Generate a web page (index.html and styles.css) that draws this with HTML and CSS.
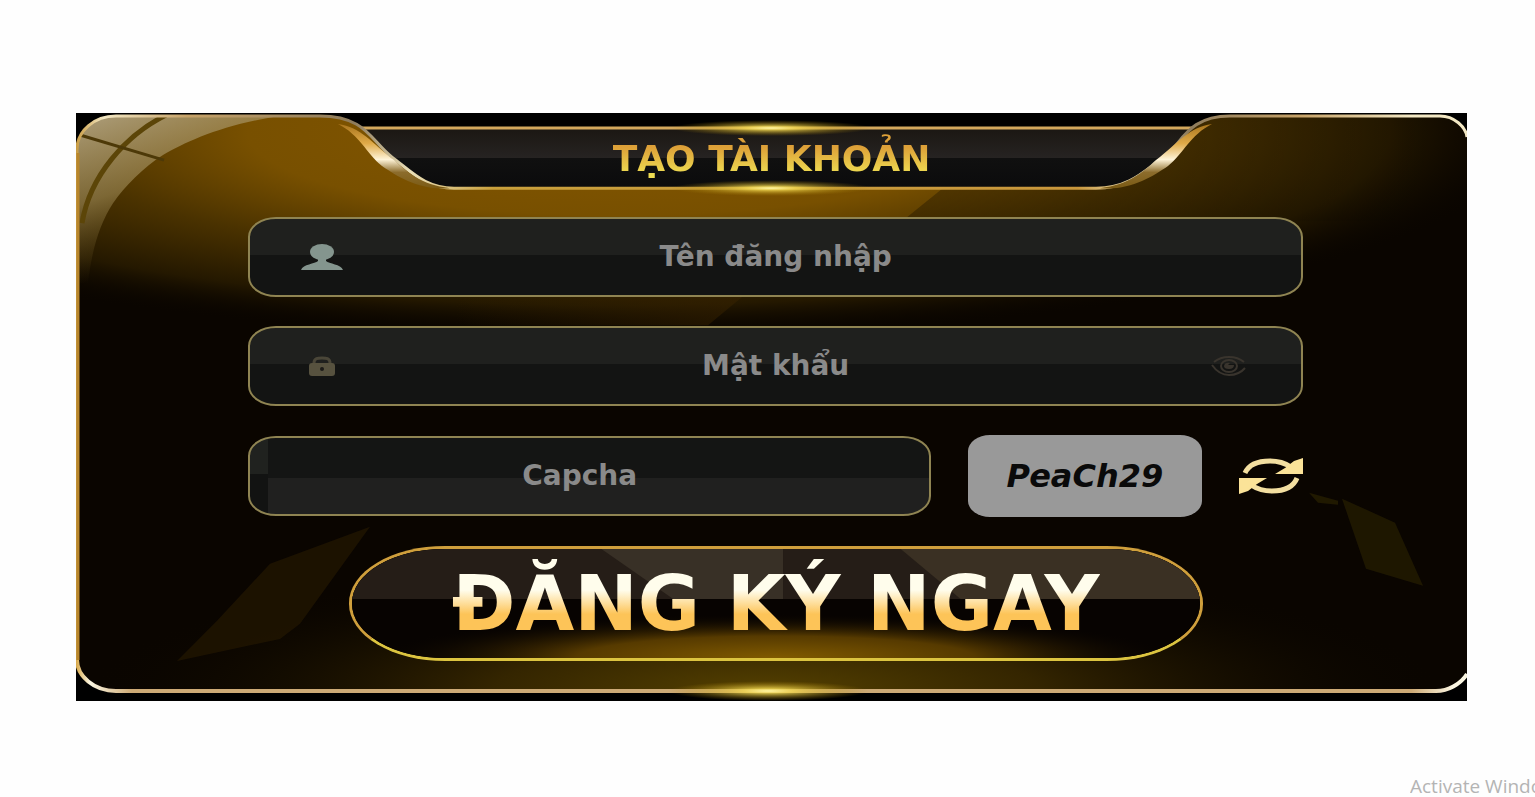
FILE: index.html
```html
<!DOCTYPE html>
<html lang="vi">
<head>
    <meta charset="UTF-8">
    <meta name="viewport" content="width=device-width, initial-scale=1.0">
    <title>Tạo tài khoản</title>
    <link rel="stylesheet" href="styles.css">
</head>
<body>
    <main class="panel">
        <!-- Gold frame and glow behind the form -->
        <svg class="panel-frame" viewBox="0 0 1391 587" preserveAspectRatio="none" aria-hidden="true">
            <defs>
                <radialGradient id="amber" gradientUnits="userSpaceOnUse" cx="0" cy="0" r="1" gradientTransform="translate(540 20) scale(920 205)">
                    <stop offset="0" stop-color="#855700"/>
                    <stop offset="0.4" stop-color="#785000"/>
                    <stop offset="0.62" stop-color="#4a3200"/>
                    <stop offset="0.84" stop-color="#241800"/>
                    <stop offset="1" stop-color="#0a0500" stop-opacity="0"/>
                </radialGradient>
                <radialGradient id="floor" gradientUnits="userSpaceOnUse" cx="0" cy="0" r="1" gradientTransform="translate(690 577) scale(680 130)">
                    <stop offset="0" stop-color="#544000"/>
                    <stop offset="0.4" stop-color="#342500"/>
                    <stop offset="1" stop-color="#0a0500" stop-opacity="0"/>
                </radialGradient>
                <linearGradient id="shade" x1="0" y1="0" x2="1" y2="0">
                    <stop offset="0" stop-color="#000" stop-opacity="0.3"/>
                    <stop offset="1" stop-color="#000" stop-opacity="0"/>
                </linearGradient>
                <linearGradient id="beam" x1="0" y1="0" x2="1" y2="0">
                    <stop offset="0" stop-color="#3a2400" stop-opacity="0"/>
                    <stop offset="1" stop-color="#3a2400" stop-opacity="0.5"/>
                </linearGradient>
                <linearGradient id="gloss" gradientUnits="userSpaceOnUse" x1="20" y1="5" x2="70" y2="150">
                    <stop offset="0" stop-color="#b8aa88" stop-opacity="0.85"/>
                    <stop offset="0.5" stop-color="#a08c58" stop-opacity="0.6"/>
                    <stop offset="1" stop-color="#5c4610" stop-opacity="0"/>
                </linearGradient>
                <linearGradient id="tab" x1="0" y1="0" x2="0" y2="1">
                    <stop offset="0" stop-color="#1b1712"/>
                    <stop offset="0.5" stop-color="#262322"/>
                    <stop offset="0.5" stop-color="#101010"/>
                    <stop offset="1" stop-color="#0b0b0c"/>
                </linearGradient>
                <linearGradient id="edge" gradientUnits="userSpaceOnUse" x1="0" y1="0" x2="1391" y2="0">
                    <stop offset="0" stop-color="#c89a40"/>
                    <stop offset="0.02" stop-color="#f3e8c4"/>
                    <stop offset="0.08" stop-color="#c6a268"/>
                    <stop offset="0.2" stop-color="#8d7b5c"/>
                    <stop offset="0.24" stop-color="#eadfb8"/>
                    <stop offset="0.3" stop-color="#c9a03c"/>
                    <stop offset="0.72" stop-color="#c9973c"/>
                    <stop offset="0.76" stop-color="#eadfb8"/>
                    <stop offset="0.8" stop-color="#8d7b5c"/>
                    <stop offset="0.88" stop-color="#c6a268"/>
                    <stop offset="0.96" stop-color="#f3e8c4"/>
                </linearGradient>
                <linearGradient id="edge-bottom" gradientUnits="userSpaceOnUse" x1="0" y1="0" x2="1391" y2="0">
                    <stop offset="0" stop-color="#d8a848"/>
                    <stop offset="0.01" stop-color="#fbf6e2"/>
                    <stop offset="0.04" stop-color="#cdaa76"/>
                    <stop offset="0.96" stop-color="#cdaa76"/>
                    <stop offset="0.99" stop-color="#fbf6e2"/>
                </linearGradient>
                <linearGradient id="ribbon" x1="0" y1="0" x2="0" y2="1">
                    <stop offset="0" stop-color="#a8741c"/>
                    <stop offset="0.3" stop-color="#e0aa48"/>
                    <stop offset="0.55" stop-color="#fff4d8"/>
                    <stop offset="0.75" stop-color="#8c6c2c"/>
                    <stop offset="1" stop-color="#7a5a14"/>
                </linearGradient>
                <radialGradient id="flare">
                    <stop offset="0" stop-color="#fff7a8"/>
                    <stop offset="0.25" stop-color="#f2d850" stop-opacity="0.8"/>
                    <stop offset="1" stop-color="#a07800" stop-opacity="0"/>
                </radialGradient>
                <clipPath id="body-clip">
                    <path d="M1 36C1 18 18 3 40 3H244C290 3 295 28 316 44S350 75 378 75H1020C1055 75 1070 56 1088 44S1110 3 1154 3H1364C1378 3 1390 14 1391 24V560C1385 570 1372 577 1360 577H40C18 577 1 562 1 546Z"/>
                </clipPath>
            </defs>
            <rect width="1391" height="587" fill="#000"/>
            <rect x="284" y="15" width="840" height="60" fill="url(#tab)"/>
            <path d="M286 15H1122" stroke="#d2a75c" stroke-width="3"/>

            <g clip-path="url(#body-clip)">
                <rect width="1391" height="587" fill="#0a0500"/>
                <rect width="1391" height="587" fill="url(#amber)"/>
                <rect y="400" width="1391" height="187" fill="url(#floor)"/>
                <path d="M960 0L826 108H1391V0Z" fill="url(#shade)"/>
                <path d="M667 183L632 212H380V183Z" fill="url(#beam)"/>
                <path d="M0 0H230C160 6 114 26 87 42C68 54 48 74 37 90C24 110 16 135 12 170H0Z" fill="url(#gloss)"/>
                <path d="M90 2C50 22 14 62 6 110" fill="none" stroke="#5c4508" stroke-width="5"/>
                <path d="M4 22L88 47" stroke="#4d3908" stroke-width="3"/>
                <path d="M294 413L194 450L141 507L101 547L204 525L224 510Z" fill="#281a00" opacity="0.6"/>
                <path d="M1266 385L1319 409L1347 472L1290 455Z" fill="#221b00" opacity="0.85"/>
                <path d="M1233 379L1262 387V391L1242 389Z" fill="#201900"/>
            </g>

            <path d="M1 546V36C1 18 18 3 40 3H244C290 3 295 28 316 44S350 75 378 75H1020C1055 75 1070 56 1088 44S1110 3 1154 3H1364C1378 3 1390 14 1391 24" fill="none" stroke="url(#edge)" stroke-width="3"/>
            <path d="M1391 560C1385 570 1372 577 1360 577H40C18 577 1 562 1 546" fill="none" stroke="url(#edge-bottom)" stroke-width="4"/>
            <path d="M2 546V40" stroke="#b8862c" stroke-width="3"/>
            <path d="M262 11C285 14 296 30 318 47C330 58 345 72 374 75C345 78 322 64 306 53C290 40 284 22 262 11Z" fill="url(#ribbon)"/>
            <path d="M1136 11C1113 14 1102 30 1080 47C1068 58 1053 72 1024 75C1053 78 1076 64 1092 53C1108 40 1114 22 1136 11Z" fill="url(#ribbon)"/>

            <ellipse cx="695" cy="15" rx="100" ry="8" fill="url(#flare)"/>
            <ellipse cx="695" cy="75" rx="100" ry="8" fill="url(#flare)"/>
            <ellipse cx="692" cy="577" rx="100" ry="10" fill="url(#flare)"/>
        </svg>

        <h1 class="title"><span>TẠO TÀI KHOẢN</span></h1>

        <form class="form">
            <div class="field">
                <svg class="icon-user" viewBox="0 0 42 26" fill="#84958e" aria-hidden="true">
                    <ellipse cx="21" cy="8" rx="12" ry="8"/>
                    <path d="M17 14V17C14 20 2 20 0 26H42C40 20 28 20 25 17V14Z"/>
                </svg>
                <input type="text" placeholder="Tên đăng nhập" aria-label="Tên đăng nhập">
            </div>

            <div class="field">
                <svg class="icon-lock" viewBox="0 0 28 20" aria-hidden="true">
                    <path d="M6 9V7C6 2 10 2 14 2S22 2 22 7V9" fill="none" stroke="#4a4638" stroke-width="3"/>
                    <rect x="1" y="7" width="26" height="13" rx="3" fill="#57523f"/>
                    <ellipse cx="14" cy="13" rx="2" ry="2" fill="#1c1b18"/>
                </svg>
                <input type="password" placeholder="Mật khẩu" aria-label="Mật khẩu">
                <button type="button" class="icon-button" aria-label="Hiện mật khẩu">
                    <svg class="icon-eye" viewBox="0 0 36 20" fill="none" stroke="#39342d" stroke-width="2" aria-hidden="true">
                        <path d="M3 6Q9 1 18 1T33 6M1 9Q8 19 18 19T34 12"/>
                        <ellipse cx="18" cy="10" rx="8" ry="6"/>
                        <path d="M13 10Q14 6 19 7L17 9L23 9Q23 13 18 13T13 10Z" fill="#39342d" stroke="none"/>
                    </svg>
                </button>
            </div>

            <div class="captcha-row">
                <div class="field field-captcha">
                    <input type="text" placeholder="Capcha" aria-label="Capcha">
                </div>
                <div class="captcha-code">PeaCh29</div>
                <button type="button" class="icon-button" aria-label="Đổi mã">
                    <svg class="icon-refresh" viewBox="0 0 64 36" aria-hidden="true">
                        <g fill="none" stroke="#f3dfa0" stroke-width="5">
                            <path d="M6 15C10 6 19 3 31 3C40 3 46 5 52 9"/>
                            <path d="M58 20C54 30 44 33 33 33C24 33 18 31 12 27"/>
                        </g>
                        <path d="M64 0V16H36L46 10L55 3Z" fill="#fbe398"/>
                        <path d="M0 36V20H28L18 26L9 33Z" fill="#fbe398"/>
                    </svg>
                </button>
            </div>

            <button type="submit" class="submit">
                <svg class="submit-glass" viewBox="0 0 850 109" preserveAspectRatio="none" aria-hidden="true">
                    <defs>
                        <radialGradient id="submit-glow" gradientUnits="userSpaceOnUse" cx="0" cy="0" r="1" gradientTransform="translate(425 109) scale(400 44)">
                            <stop offset="0" stop-color="#805a00"/>
                            <stop offset="0.5" stop-color="#563a00"/>
                            <stop offset="1" stop-color="#0a0500" stop-opacity="0"/>
                        </radialGradient>
                    </defs>
                    <rect width="850" height="109" fill="#070301"/>
                    <rect width="850" height="50" fill="#251d17"/>
                    <path d="M250 0H432V50H322Z" fill="#383026"/>
                    <path d="M550 0H850V50H610Z" fill="#3a3023"/>
                    <rect y="50" width="850" height="59" fill="url(#submit-glow)"/>
                </svg>
                <span class="submit-text">ĐĂNG KÝ NGAY</span>
            </button>
        </form>
    </main>

    <div class="watermark">Activate Windows</div>
</body>
</html>
```

FILE: styles.css
```css
* {
    box-sizing: border-box;
}

body {
    margin: 0;
    min-height: 100vh;
    display: flex;
    flex-direction: column;
    background: #fefefe;
    font-family: "DejaVu Sans", sans-serif;
}

/* Panel */
.panel {
    position: relative;
    margin: 113px 68px 0 76px;
    padding: 15px 0 40px;
}

.panel-frame {
    position: absolute;
    top: 0;
    left: 0;
    width: 100%;
    height: 100%;
}

.title {
    position: relative;
    height: 61px;
    margin: 0;
    display: flex;
    justify-content: center;
    align-items: center;
    font-size: 36px;
    line-height: 60px;
    font-weight: 700;
}

.title span {
    background: linear-gradient(#dda038 30%, #eedc52 75%);
    background-clip: text;
    -webkit-background-clip: text;
    color: transparent;
}

/* Form */
.form {
    position: relative;
    margin: 28px 11.8% 0 12.4%;
    display: flex;
    flex-direction: column;
    gap: 29px;
}

.field {
    display: grid;
    grid-template-columns: 144px 1fr 144px;
    align-items: center;
    justify-items: center;
    height: 80px;
    border: 2px solid #8f8452;
    border-radius: 28px / 20px;
    background: linear-gradient(#1f201e 48%, #131413 48%);
}

.field input {
    width: 100%;
    height: 60px;
    padding: 0;
    border: 0;
    outline: 0;
    background: transparent;
    color: #999;
    font-family: inherit;
    font-size: 28px;
    line-height: 60px;
    font-weight: 700;
    text-align: center;
}

.field input::placeholder {
    color: #8a8a8a;
    line-height: 60px;
    opacity: 1;
}

.icon-user {
    width: 42px;
    height: 26px;
}

.icon-lock {
    width: 28px;
    height: 20px;
}

.icon-eye {
    width: 36px;
    height: 20px;
}

.icon-button {
    padding: 0;
    border: 0;
    background: none;
    cursor: pointer;
}

.icon-button svg {
    display: block;
}

/* Captcha */
.captcha-row {
    display: grid;
    grid-template-columns: 1fr 234px 64px;
    gap: 37px;
    align-items: center;
}

.field-captcha {
    grid-template-columns: 1fr;
    padding-right: 20px;
    background:
        linear-gradient(#20221f 48%, #121312 48%) left / 18px 100% no-repeat,
        linear-gradient(#141514 52%, #20201f 52%);
}

.captcha-code {
    height: 82px;
    display: flex;
    justify-content: center;
    align-items: center;
    border-radius: 22px / 16px;
    background: #999;
    color: #0a0a0a;
    font-size: 32px;
    font-style: italic;
    font-weight: 700;
}

.icon-refresh {
    width: 64px;
    height: 36px;
}

/* Submit */
.submit {
    position: relative;
    width: 81%;
    height: 115px;
    align-self: center;
    padding: 0;
    border: 3px solid #cf9f3c;
    border-bottom-color: #dcc440;
    border-radius: 96px / 57px;
    overflow: hidden;
    background: #070301;
    font-family: inherit;
    cursor: pointer;
}

.submit-glass {
    position: absolute;
    top: 0;
    left: 0;
    width: 100%;
    height: 100%;
}

.submit-text {
    position: relative;
    background: linear-gradient(#fffdec 35%, #fdc458 62%);
    background-clip: text;
    -webkit-background-clip: text;
    color: transparent;
    font-size: 76px;
    line-height: 108px;
    font-weight: 700;
}

/* Watermark */
.watermark {
    width: 125px;
    margin-top: auto;
    margin-left: auto;
    overflow: hidden;
    white-space: nowrap;
    color: #b4b4b4;
    font-family: "Open Sans", sans-serif;
    font-size: 19px;
    line-height: 22px;
}
```
